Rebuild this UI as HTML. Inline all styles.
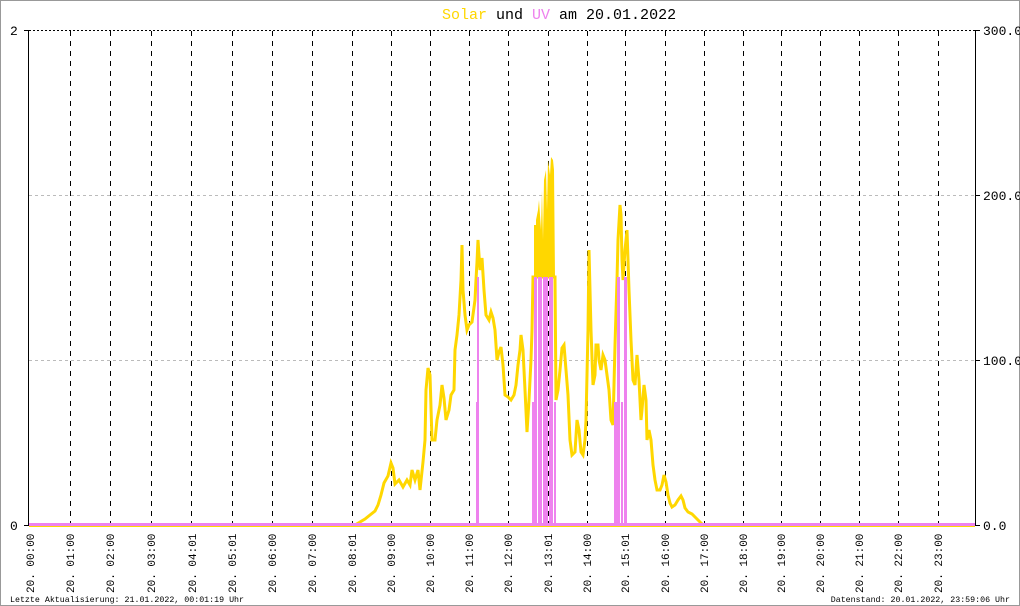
<!DOCTYPE html>
<html><head><meta charset="utf-8"><style>
html,body{margin:0;padding:0;background:#fff}
svg{display:block}
text{font-family:"Liberation Mono","DejaVu Sans Mono",monospace}
</style></head><body>
<svg width="1020" height="606" viewBox="0 0 1020 606" xmlns="http://www.w3.org/2000/svg">
<rect x="0.5" y="0.5" width="1019" height="605" fill="#fff" stroke="#999"/>
<text x="442" y="19" font-size="15"><tspan fill="#ffd700">Solar</tspan><tspan fill="#000"> und </tspan><tspan fill="#ee82ee">UV</tspan><tspan fill="#000"> am 20.01.2022</tspan></text>
<!-- grid -->
<g stroke="#bbb" stroke-dasharray="3,3">
<line x1="29" y1="195.5" x2="975" y2="195.5"/>
<line x1="29" y1="360.5" x2="975" y2="360.5"/>
</g>
<line x1="29" y1="30.5" x2="975" y2="30.5" stroke="#000" stroke-dasharray="2,2"/>
<g stroke="#000" stroke-dasharray="5,5">
<line x1="70.5" y1="31" x2="70.5" y2="525"/><line x1="110.5" y1="31" x2="110.5" y2="525"/>
<line x1="151.5" y1="31" x2="151.5" y2="525"/><line x1="191.5" y1="31" x2="191.5" y2="525"/>
<line x1="232.5" y1="31" x2="232.5" y2="525"/><line x1="272.5" y1="31" x2="272.5" y2="525"/>
<line x1="312.5" y1="31" x2="312.5" y2="525"/><line x1="352.5" y1="31" x2="352.5" y2="525"/>
<line x1="391.5" y1="31" x2="391.5" y2="525"/><line x1="430.5" y1="31" x2="430.5" y2="525"/>
<line x1="469.5" y1="31" x2="469.5" y2="525"/><line x1="508.5" y1="31" x2="508.5" y2="525"/>
<line x1="548.5" y1="31" x2="548.5" y2="525"/><line x1="587.5" y1="31" x2="587.5" y2="525"/>
<line x1="625.5" y1="31" x2="625.5" y2="525"/><line x1="665.5" y1="31" x2="665.5" y2="525"/>
<line x1="704.5" y1="31" x2="704.5" y2="525"/><line x1="743.5" y1="31" x2="743.5" y2="525"/>
<line x1="781.5" y1="31" x2="781.5" y2="525"/><line x1="820.5" y1="31" x2="820.5" y2="525"/>
<line x1="859.5" y1="31" x2="859.5" y2="525"/><line x1="898.5" y1="31" x2="898.5" y2="525"/>
<line x1="938.5" y1="31" x2="938.5" y2="525"/>
</g>
<!-- axes -->
<line x1="28.5" y1="30" x2="28.5" y2="526" stroke="#000"/>
<line x1="24" y1="30.5" x2="29" y2="30.5" stroke="#000"/>
<line x1="24" y1="525.5" x2="29" y2="525.5" stroke="#000"/>
<line x1="975.5" y1="30" x2="975.5" y2="526" stroke="#000"/>
<line x1="975" y1="30.5" x2="980" y2="30.5" stroke="#000"/>
<line x1="975" y1="195.5" x2="980" y2="195.5" stroke="#000"/>
<line x1="975" y1="360.5" x2="980" y2="360.5" stroke="#000"/>
<line x1="975" y1="525.5" x2="980" y2="525.5" stroke="#000"/>
<g font-size="13" fill="#000">
<text x="10" y="35">2</text><text x="10" y="530">0</text>
<text x="983" y="35">300.0</text><text x="983" y="200">200.0</text>
<text x="983" y="365">100.0</text><text x="983" y="530">0.0</text>
</g>
<!-- solar dense fill -->
<polygon fill="#ffd700" points="534,277 534,225 536,225 536,220 538,210 539,200 541,230 542,190 543,240 544,180 546,170 547,210 548,160 550,175 551,157 553,160 554,170 555,277"/>
<!-- solar line -->
<polyline fill="none" stroke="#ffd700" stroke-width="3" stroke-linejoin="miter" points="29,525 355,525 360,522 365,519 370,515 375,511 378,505 381,495 384,483 388,476 391,463 393,468 395,484 399,480 403,487 407,480 410,485 412,470 415,480 418,470 420,490 423,462 425,440 426,390 428,368 430,375 432,440 435,440 437,420 440,405 442,385 444,398 446,420 449,410 451,395 454,390 455,350 457,335 459,315 461,280 462,245 463,290 465,315 467,330 469,325 472,322 475,300 476,280 477,262 478,240 480,270 482,258 484,290 486,315 489,320 491,312 493,318 495,330 497,360 499,352 501,347 503,365 505,395 508,397 511,400 514,395 516,385 518,365 520,350 521,335 523,350 525,390 527,432 529,400 531,360 532,330 533,277 555,277 556,400 558,390 560,370 562,348 564,345 566,370 568,395 570,440 572,455 575,452 577,420 579,430 581,452 583,455 585,440 586,420 588,330 589,250 591,330 593,385 595,375 596,345 598,345 599,360 601,370 603,355 605,360 607,375 609,390 611,420 613,425 615,345 617,280 618,240 620,205 621,215 622,260 623,280 625,250 627,230 629,290 631,340 633,380 635,385 636,370 637,355 639,380 641,420 642,410 644,385 646,400 647,440 649,430 651,440 653,465 655,480 657,490 660,490 662,485 664,475 666,482 668,495 670,503 672,507 675,505 678,500 681,496 683,500 685,508 688,512 692,514 696,518 700,522 703,525 975,525"/>
<!-- UV -->
<g fill="#ee82ee">
<rect x="476" y="402" width="3" height="123"/>
<rect x="477" y="277" width="2" height="248"/>
<rect x="532" y="402" width="3" height="123"/>
<rect x="534" y="277" width="3" height="248"/>
<rect x="538" y="277" width="4" height="248"/>
<rect x="543" y="277" width="5" height="248"/>
<rect x="549" y="277" width="4" height="248"/>
<rect x="554" y="402" width="2" height="123"/>
<rect x="614" y="402" width="3" height="123"/>
<rect x="617" y="277" width="3" height="248"/>
<rect x="621" y="402" width="2" height="123"/>
<rect x="624" y="277" width="3" height="248"/>
</g>
<rect x="29" y="523" width="946" height="3" fill="#ee82ee"/>
<rect x="29" y="526" width="946" height="1" fill="#ffd700"/>
<!-- x labels -->
<g font-size="11" fill="#000">
<text transform="translate(34,593) rotate(-90)">20. 00:00</text>
<text transform="translate(74,593) rotate(-90)">20. 01:00</text>
<text transform="translate(114,593) rotate(-90)">20. 02:00</text>
<text transform="translate(155,593) rotate(-90)">20. 03:00</text>
<text transform="translate(196,593) rotate(-90)">20. 04:01</text>
<text transform="translate(236,593) rotate(-90)">20. 05:01</text>
<text transform="translate(276,593) rotate(-90)">20. 06:00</text>
<text transform="translate(316,593) rotate(-90)">20. 07:00</text>
<text transform="translate(356,593) rotate(-90)">20. 08:01</text>
<text transform="translate(395,593) rotate(-90)">20. 09:00</text>
<text transform="translate(434,593) rotate(-90)">20. 10:00</text>
<text transform="translate(473,593) rotate(-90)">20. 11:00</text>
<text transform="translate(512,593) rotate(-90)">20. 12:00</text>
<text transform="translate(552,593) rotate(-90)">20. 13:01</text>
<text transform="translate(591,593) rotate(-90)">20. 14:00</text>
<text transform="translate(629,593) rotate(-90)">20. 15:01</text>
<text transform="translate(669,593) rotate(-90)">20. 16:00</text>
<text transform="translate(708,593) rotate(-90)">20. 17:00</text>
<text transform="translate(747,593) rotate(-90)">20. 18:00</text>
<text transform="translate(785,593) rotate(-90)">20. 19:00</text>
<text transform="translate(824,593) rotate(-90)">20. 20:00</text>
<text transform="translate(863,593) rotate(-90)">20. 21:00</text>
<text transform="translate(902,593) rotate(-90)">20. 22:00</text>
<text transform="translate(942,593) rotate(-90)">20. 23:00</text>
</g>
<text x="10" y="602" font-size="8.3" fill="#000">Letzte Aktualisierung: 21.01.2022, 00:01:19 Uhr</text>
<text x="1010" y="602" font-size="8.3" fill="#000" text-anchor="end">Datenstand: 20.01.2022, 23:59:06 Uhr</text>
</svg>
</body></html>
